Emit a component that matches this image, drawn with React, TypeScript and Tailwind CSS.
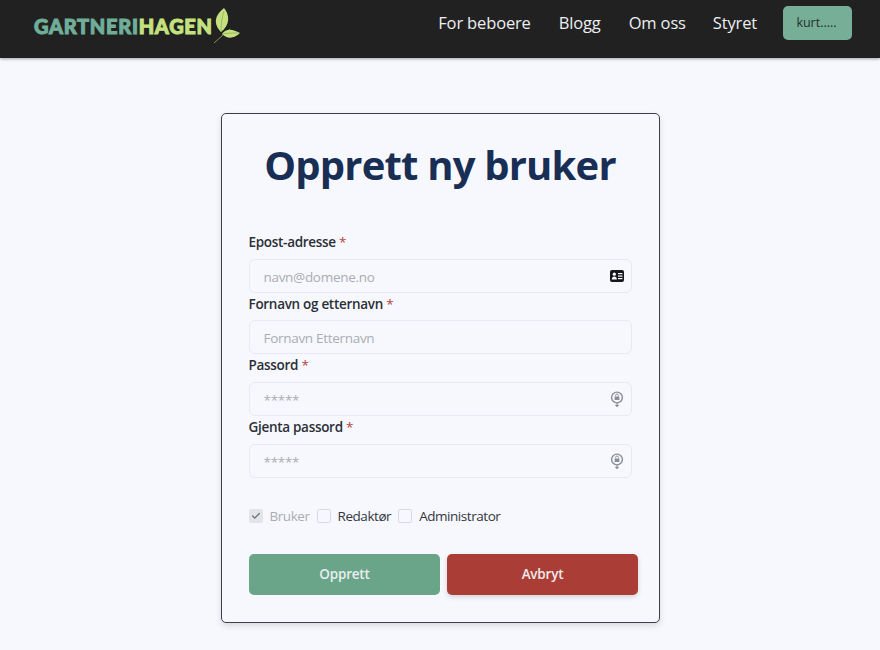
import { Check } from 'lucide-react';

const font = { fontFamily: '"Open Sans", "Noto Sans", sans-serif' };

function LeafLogo() {
  return (
    <svg width="28" height="36" viewBox="0 0 28 36" className="-mt-[1px] shrink-0">
      <path d="M1 35 L10 27 L17 21" stroke="#7d8f5a" strokeWidth="1" fill="none" />
      <path d="M7 23 C0 15 2 7 11 0 C17 7 17 17 8 24 Z" fill="#c5e17f" />
      <path d="M8 24 C8 16 9 9 11 3" stroke="#8fa65a" strokeWidth="0.7" fill="none" />
      <path d="M9 26 C13 20 20 21 27 25 C21 31 14 31 9 26 Z" fill="#c5e17f" />
      <path d="M9 26 C14 25 20 25 25 25" stroke="#8fa65a" strokeWidth="0.7" fill="none" />
    </svg>
  );
}

function IdCard() {
  return (
    <svg width="14" height="12" viewBox="0 0 14 12">
      <rect x="0" y="0" width="14" height="12" rx="2" fill="#15171c" />
      <circle cx="4.3" cy="4.2" r="1.6" fill="#fff" />
      <path d="M1.8 9.5 C1.8 7.4 3 6.6 4.3 6.6 C5.6 6.6 6.8 7.4 6.8 9.5 Z" fill="#fff" />
      <rect x="8" y="3" width="4.5" height="1.2" fill="#fff" />
      <rect x="8" y="5.5" width="4.5" height="1.2" fill="#fff" />
      <rect x="8" y="8" width="4.5" height="1.2" fill="#fff" />
    </svg>
  );
}

function LockIcon() {
  return (
    <svg width="14" height="17" viewBox="0 0 14 17" fill="none">
      <circle cx="7" cy="7.5" r="5.4" stroke="#8b8f95" strokeWidth="1.4" />
      <path d="M7 13 V16.5 M5.4 14.9 L7 16.5 L8.6 14.9" stroke="#8b8f95" strokeWidth="1.1" />
      <rect x="4.6" y="6.4" width="4.8" height="3.6" rx="0.5" fill="#8b8f95" />
      <path d="M5.6 6.4 V5.4 A1.4 1.4 0 0 1 8.4 5.4 V6.4" stroke="#8b8f95" strokeWidth="0.9" />
    </svg>
  );
}

function Field({ label, placeholder, icon }: { label: string; placeholder: string; icon?: React.ReactNode }) {
  return (
    <div>
      <label className="block h-[27.67px] pt-[1px] text-[13.5px] leading-[20px] font-semibold tracking-[-0.3px] text-[#2b2f36]">
        {label} <span className="text-[#b5433a] font-normal">*</span>
      </label>
      <div className="flex h-[34px] items-center justify-between rounded-[6px] border border-[#e7e9f1] bg-[#f7f8fe] pl-[14px] pr-[7px]">
        <span className="pt-[2px] text-[13.5px] tracking-[-0.3px] text-[#a9adb3]">{placeholder}</span>
        {icon}
      </div>
    </div>
  );
}

function Role({ label, checked }: { label: string; checked?: boolean }) {
  return (
    <div className="flex items-center gap-[7px]">
      <span
        className={`flex h-[14px] w-[14px] items-center justify-center rounded-[2px] border ${
          checked ? 'border-[#e3e4ea] bg-[#e3e4ea]' : 'border-[#d9dbe2] bg-[#f7f8fe]'
        }`}
      >
        {checked && <Check size={10} strokeWidth={3} className="text-[#6b6e74]" />}
      </span>
      <span className={`text-[13.5px] tracking-[-0.45px] ${checked ? 'text-[#a9adb3]' : 'text-[#33373d]'}`}>{label}</span>
    </div>
  );
}

export default function App() {
  return (
    <div className="h-[650px] overflow-hidden bg-[#f7f8fe]" style={font}>
      <header className="flex h-[58px] justify-between bg-[#212121] pl-[34px] pr-[28px] shadow-[0_1px_3px_rgba(0,0,0,0.35)]">
        <div className="flex items-center pb-[6px]">
          <span
            className="text-[20px] leading-none font-black tracking-[0.7px] text-[#6fae98] [-webkit-text-stroke:1px_currentColor]"
            style={{ fontFamily: 'Lato, sans-serif' }}
          >
            GARTNERI<span className="text-[#c5e17f]">HAGEN</span>
          </span>
          <LeafLogo />
        </div>
        <nav className="flex h-[46px] items-center">
          <a className="text-[16.5px] tracking-[-0.15px] text-[#eceff3]">For beboere</a>
          <a className="ml-[28px] text-[16.5px] tracking-[-0.15px] text-[#eceff3]">Blogg</a>
          <a className="ml-[28px] text-[16.5px] tracking-[-0.15px] text-[#eceff3]">Om oss</a>
          <a className="ml-[27px] text-[16.5px] tracking-[-0.15px] text-[#eceff3]">Styret</a>
          <button className="ml-[26px] flex h-[34px] w-[69px] items-center justify-center rounded-[5px] bg-[#77ae97] pr-[2px] text-[12.5px] font-medium text-[#23302b]">
            kurt.....
          </button>
        </nav>
      </header>

      <main className="flex justify-center pt-[55px]">
        <div className="h-[510px] w-[439px] rounded-[5px] border border-[#3c4046] bg-[#f7f8fe] px-[27px] shadow-[0_3px_6px_rgba(0,0,0,0.12)]">
          <h1 className="pt-[21px] text-center text-[40px] leading-[60px] font-bold tracking-[-0.8px] whitespace-nowrap text-[#182e54]">
            Opprett ny bruker
          </h1>
          <div className="mt-[36px] flex flex-col">
            <Field label="Epost-adresse" placeholder="navn@domene.no" icon={<IdCard />} />
            <Field label="Fornavn og etternavn" placeholder="Fornavn Etternavn" />
            <Field label="Passord" placeholder="*****" icon={<LockIcon />} />
            <Field label="Gjenta passord" placeholder="*****" icon={<LockIcon />} />
          </div>
          <div className="mt-[28px] flex h-[20px] items-center gap-[7px]">
            <Role label="Bruker" checked />
            <Role label="Redaktør" />
            <Role label="Administrator" />
          </div>
          <div className="mt-[28px] flex gap-[7px]">
            <button className="h-[41px] w-[191px] shrink-0 rounded-[5px] bg-[#6aa58a] pl-[1px] text-[13.5px] font-semibold tracking-[-0.2px] text-[#e9eef0]">
              Opprett
            </button>
            <button className="h-[41px] w-[191px] shrink-0 rounded-[5px] bg-[#aa3e36] pl-[1px] text-[13.5px] font-semibold tracking-[-0.2px] text-[#f1e9e9] shadow-[0_2px_5px_rgba(0,0,0,0.15)]">
              Avbryt
            </button>
          </div>
        </div>
      </main>
    </div>
  );
}
